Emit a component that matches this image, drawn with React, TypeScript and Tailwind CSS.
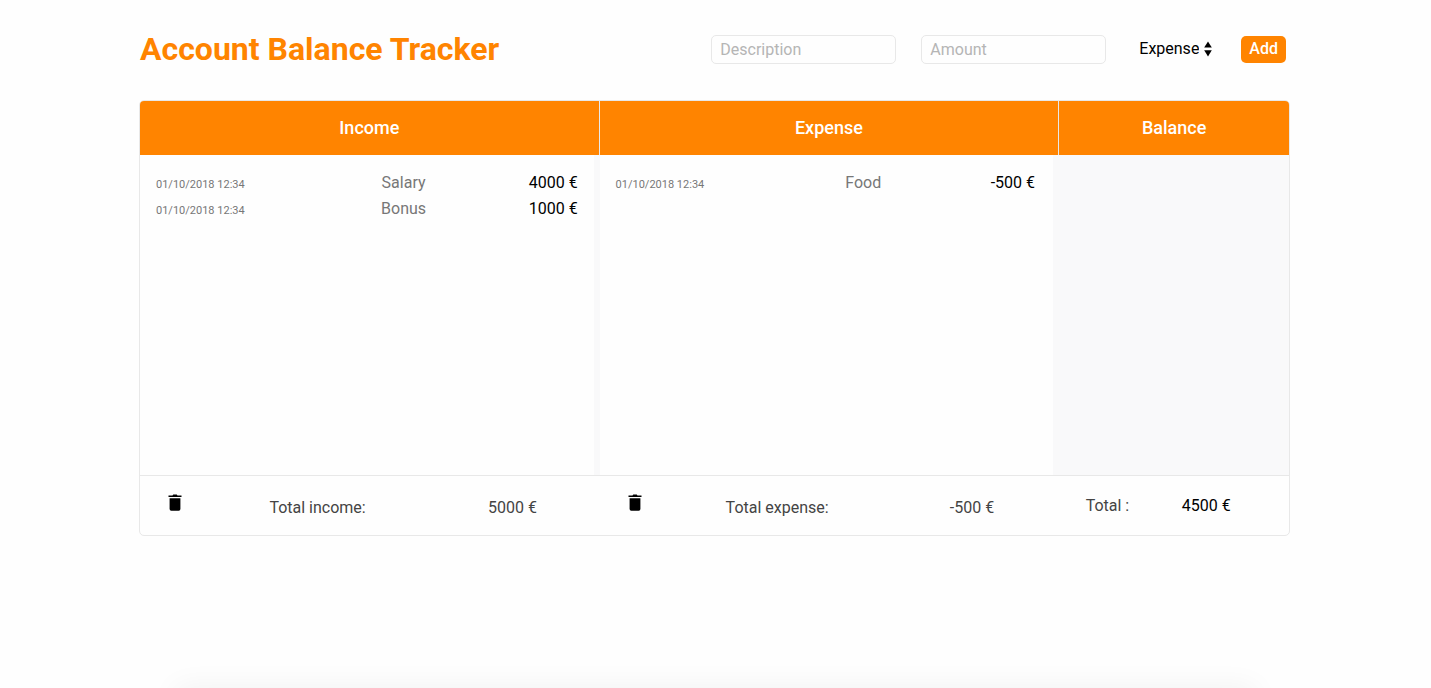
import React from "react";

type Entry = { date: string; description: string; amount: string };

const income: Entry[] = [
  { date: "01/10/2018 12:34", description: "Salary", amount: "4000 €" },
  { date: "01/10/2018 12:34", description: "Bonus", amount: "1000 €" },
];

const expenses: Entry[] = [
  { date: "01/10/2018 12:34", description: "Food", amount: "-500 €" },
];

function TrashIcon() {
  return (
    <svg viewBox="0 0 14 18" className="h-[18px] w-[14px]" fill="currentColor" aria-hidden="true">
      <path d="M4.5 1.5 5.3.6h3.4l.8.9h4v1.4H.5V1.5z" />
      <path d="M1.6 4.2h10.8v10.9a1.7 1.7 0 0 1-1.7 1.7H3.3a1.7 1.7 0 0 1-1.7-1.7z" />
    </svg>
  );
}

function SortIcon() {
  return (
    <svg viewBox="0 0 8 16" className="pointer-events-none h-4 w-2" fill="currentColor" aria-hidden="true">
      <path d="M4 .5 7.8 6.6H.2z" />
      <path d="M.2 9.2h7.6L4 15.5z" />
    </svg>
  );
}

function ColumnTitle({ children, last = false }: { children: string; last?: boolean }) {
  return (
    <h2
      className={
        last
          ? "flex h-[54px] items-center justify-center bg-[#ff8400] text-lg font-medium text-white"
          : "flex h-[54px] items-center justify-center border-r border-[#e8e8e8] bg-[#ff8400] text-lg font-medium text-white"
      }
    >
      {children}
    </h2>
  );
}

function Ledger({ title, label, total, entries }: { title: string; label: string; total: string; entries: Entry[] }) {
  return (
    <section>
      <ColumnTitle>{title}</ColumnTitle>
      <div className="h-80 bg-[#f9f9fa] pr-[6px]">
        <div className="h-full bg-[#fefefe] pt-[15px]">
          <table className="w-full table-fixed" aria-label={title}>
            <tbody>
              {entries.map((entry) => (
                <tr key={entry.description} className="h-[26px]">
                  <td className="w-[34%] pt-1 pl-4 text-[11px] whitespace-nowrap text-[#777]">{entry.date}</td>
                  <td className="pl-px text-center text-[#777]">{entry.description}</td>
                  <td className="w-[18%] pl-px text-center whitespace-nowrap text-black">{entry.amount}</td>
                </tr>
              ))}
            </tbody>
          </table>
        </div>
      </div>
      <div className="grid h-[60px] grid-cols-[15%_47%_38%] items-center justify-items-center border-t border-[#e8e8e8] pl-px text-[#444]">
        <button type="button" aria-label={`Clear ${title}`} className="pb-1.5 text-black">
          <TrashIcon />
        </button>
        <span className="pt-1">{label}</span>
        <span className="pt-1">{total}</span>
      </div>
    </section>
  );
}

export default function App() {
  return (
    <div className="flex min-h-screen flex-col overflow-hidden bg-[#fefefe] font-['Roboto',sans-serif] text-base text-black">
      <div className="pr-[141px] pl-[139px]">
        <header className="flex h-[100px] items-center justify-between pr-1 pb-[2px] pl-px">
          <h1 className="text-[32px] leading-none font-bold text-[#ff8400]">Account Balance Tracker</h1>
          <form className="flex items-center" onSubmit={(event) => event.preventDefault()}>
            <input
              aria-label="Description"
              placeholder="Description"
              className="mr-[25px] h-[29px] w-[185px] rounded-[5px] border border-[#e8e8e8] px-2 placeholder:text-[#b5b5b5]"
            />
            <input
              aria-label="Amount"
              placeholder="Amount"
              className="mr-[33px] h-[29px] w-[185px] rounded-[5px] border border-[#e8e8e8] px-2 placeholder:text-[#b5b5b5]"
            />
            <div className="mr-[29px] flex items-center gap-[5px]">
              <select aria-label="Type" defaultValue="Expense" className="appearance-none bg-transparent field-sizing-content">
                <option>Expense</option>
                <option>Income</option>
              </select>
              <SortIcon />
            </div>
            <button type="submit" className="h-[27px] rounded-[5px] bg-[#ff8400] px-2 font-medium text-white">
              Add
            </button>
          </form>
        </header>
        <main className="grid grid-cols-[2fr_2fr_1fr] overflow-hidden rounded-[5px] border border-[#e8e8e8]">
          <Ledger title="Income" label="Total income:" total="5000 €" entries={income} />
          <Ledger title="Expense" label="Total expense:" total="-500 €" entries={expenses} />
          <section>
            <ColumnTitle last>Balance</ColumnTitle>
            <div className="h-80 bg-[#f9f9fa]" />
            <div className="grid h-[60px] grid-cols-[42%_44%] items-center justify-items-center border-t border-[#e8e8e8]">
              <span className="text-[#444]">Total :</span>
              <span>4500 €</span>
            </div>
          </section>
        </main>
      </div>
      <div className="mx-[190px] mt-auto h-0 shadow-[0_14px_30px_14px_rgba(0,0,0,0.06)]" />
    </div>
  );
}
